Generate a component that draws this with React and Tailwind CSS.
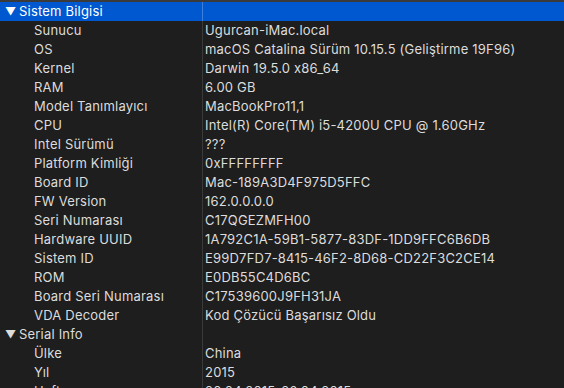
const rows = [
  { group: "Sistem Bilgisi", selected: true },
  { k: "Sunucu", v: "Ugurcan-iMac.local" },
  { k: "OS", v: "macOS Catalina Sürüm 10.15.5 (Geliştirme 19F96)" },
  { k: "Kernel", v: "Darwin 19.5.0 x86_64" },
  { k: "RAM", v: "6.00 GB" },
  { k: "Model Tanımlayıcı", v: "MacBookPro11,1" },
  { k: "CPU", v: "Intel(R) Core(TM) i5-4200U CPU @ 1.60GHz" },
  { k: "Intel Sürümü", v: "???" },
  { k: "Platform Kimliği", v: "0xFFFFFFFF" },
  { k: "Board ID", v: "Mac-189A3D4F975D5FFC" },
  { k: "FW Version", v: "162.0.0.0.0" },
  { k: "Seri Numarası", v: "C17QGEZMFH00" },
  { k: "Hardware UUID", v: "1A792C1A-59B1-5877-83DF-1DD9FFC6B6DB" },
  { k: "Sistem ID", v: "E99D7FD7-8415-46F2-8D68-CD22F3C2CE14" },
  { k: "ROM", v: "E0DB55C4D6BC" },
  { k: "Board Seri Numarası", v: "C17539600J9FH31JA" },
  { k: "VDA Decoder", v: "Kod Çözücü Başarısız Oldu" },
  { group: "Serial Info" },
  { k: "Ülke", v: "China" },
  { k: "Yıl", v: "2015" },
  { k: "Hafta", v: "20.04.2015-26.04.2015" },
];

function Row({ row }) {
  const sel = row.selected;
  return (
    <div className={`flex h-[19px] items-center ${sel ? "bg-[#0058d0] text-white" : "text-[#dcdcdc]"}`}>
      <div className="w-[202px] shrink-0 flex items-center">
        {row.group ? (
          <>
            <span className="ml-[5px] w-[14px] text-[11px] leading-none">▼</span>
            <span>{row.group}</span>
          </>
        ) : (
          <span className="ml-[34px]">{row.k}</span>
        )}
      </div>
      <div className={`h-full w-px ${sel ? "bg-[#3d7fdc]" : "bg-[#3a3a3a]"}`} />
      <div className="pl-[2px] whitespace-nowrap">{row.v}</div>
    </div>
  );
}

export default function App() {
  return (
    <div
      className="w-[564px] h-[388px] overflow-hidden bg-[#1e1e1e] text-[13px] tracking-[0.2px]"
      style={{ fontFamily: "Inter, 'Noto Sans', sans-serif" }}
    >
      <div className="h-[2px] bg-[#3a3a3a]" />
      {rows.map((r, i) => (
        <Row key={i} row={r} />
      ))}
    </div>
  );
}
